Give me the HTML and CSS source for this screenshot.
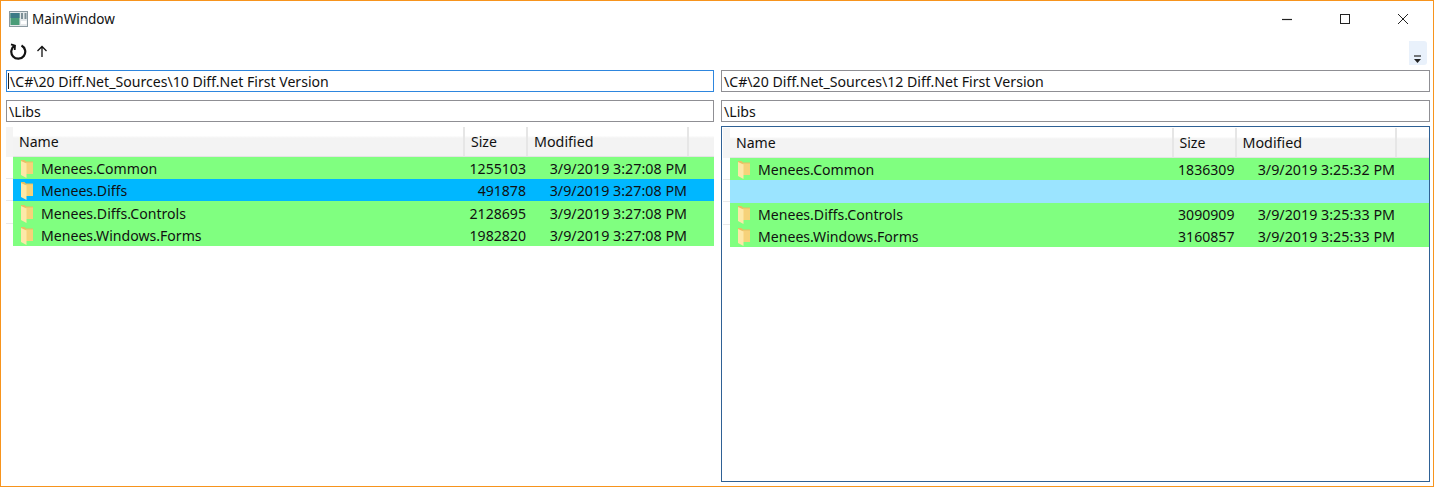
FILE: index.html
```html
<!DOCTYPE html>
<html lang="en">
<head>
    <meta charset="UTF-8">
    <title>MainWindow</title>
    <link rel="stylesheet" href="styles.css">
</head>
<body>
    <svg width="0" height="0" class="defs">
        <symbol id="folder" viewBox="0 0 14 19">
            <path d="M1 1h3.500l1.500 1.500h7V15H1z" fill="#e6c062"/>
            <path d="M5.500 3.500H13V15H5.500z" fill="#f6d27a"/>
            <path d="M1 2 6.500 4.500V19L1 16z" fill="#fde8a8"/>
        </symbol>
    </svg>
    <div class="window">
        <div class="titlebar">
            <div class="title">
                <svg class="app-icon" width="19" height="16" viewBox="0 0 19 16">
                    <rect x="0.500" y="0.500" width="18" height="15" fill="#e4e8ea" stroke="#8b99a0"/>
                    <rect x="1.500" y="2" width="9" height="12" fill="#4a9c78"/>
                    <rect x="1.500" y="2" width="9" height="5" fill="#3c7a86"/>
                    <rect x="12" y="2" width="2" height="6" fill="#7d8f96"/>
                    <rect x="15.500" y="2" width="2" height="6" fill="#7d8f96"/>
                    <rect x="12" y="10" width="5.500" height="3" fill="#fff"/>
                </svg>
                <span>MainWindow</span>
            </div>
            <div class="win-buttons">
                <svg width="12" height="12" viewBox="0 0 12 12"><path d="M1 6.500h10" stroke="#222" stroke-width="1.200"/></svg>
                <svg width="12" height="12" viewBox="0 0 12 12"><rect x="1.500" y="1.500" width="9" height="9" fill="none" stroke="#222" stroke-width="1"/></svg>
                <svg width="12" height="12" viewBox="0 0 12 12"><path d="M1 1l10 10M11 1 1 11" stroke="#222" stroke-width="1"/></svg>
            </div>
        </div>

        <div class="toolbar">
            <div class="tools">
                <svg width="17" height="18" viewBox="0 0 17 18">
                    <path d="M11.500 3.500A7 7 0 1 1 4.500 3.800" fill="none" stroke="#111" stroke-width="2.200"/>
                    <path d="M1 2.300 5 3.600 4.700 8" fill="none" stroke="#111" stroke-width="1.800"/>
                </svg>
                <svg width="12" height="12" viewBox="0 0 12 12">
                    <path d="M6 12V1.500M1.500 6 6 1.500 10.500 6" fill="none" stroke="#111" stroke-width="1.300"/>
                </svg>
            </div>
            <div class="overflow">
                <svg width="10" height="10" viewBox="0 0 10 10">
                    <path d="M1 2h7" stroke="#222" stroke-width="1.200"/>
                    <path d="M1 5h7L4.500 9z" fill="#222"/>
                </svg>
            </div>
        </div>

        <div class="panes">
            <section class="pane pane-left">
                <div class="path path-focus">\C#\20 Diff.Net_Sources\10 Diff.Net First Version</div>
                <div class="path">\Libs</div>
                <div class="list">
                    <div class="gutter"></div>
                    <div class="table">
                        <div class="row head">
                            <div class="col-name">Name</div>
                            <div class="col-size">Size</div>
                            <div class="col-mod">Modified</div>
                        </div>
                        <div class="row same">
                            <div class="col-name"><svg class="folder"><use href="#folder"/></svg>Menees.Common</div>
                            <div class="col-size">1255103</div>
                            <div class="col-mod">3/9/2019 3:27:08 PM</div>
                        </div>
                        <div class="row selected">
                            <div class="col-name"><svg class="folder"><use href="#folder"/></svg>Menees.Diffs</div>
                            <div class="col-size">491878</div>
                            <div class="col-mod">3/9/2019 3:27:08 PM</div>
                        </div>
                        <div class="row same tall">
                            <div class="col-name"><svg class="folder"><use href="#folder"/></svg>Menees.Diffs.Controls</div>
                            <div class="col-size">2128695</div>
                            <div class="col-mod">3/9/2019 3:27:08 PM</div>
                        </div>
                        <div class="row same">
                            <div class="col-name"><svg class="folder"><use href="#folder"/></svg>Menees.Windows.Forms</div>
                            <div class="col-size">1982820</div>
                            <div class="col-mod">3/9/2019 3:27:08 PM</div>
                        </div>
                    </div>
                </div>
            </section>

            <section class="pane pane-right">
                <div class="path">\C#\20 Diff.Net_Sources\12 Diff.Net First Version</div>
                <div class="path">\Libs</div>
                <div class="list list-focus">
                    <div class="gutter"></div>
                    <div class="table">
                        <div class="row head">
                            <div class="col-name">Name</div>
                            <div class="col-size">Size</div>
                            <div class="col-mod">Modified</div>
                        </div>
                        <div class="row same">
                            <div class="col-name"><svg class="folder"><use href="#folder"/></svg>Menees.Common</div>
                            <div class="col-size">1836309</div>
                            <div class="col-mod">3/9/2019 3:25:32 PM</div>
                        </div>
                        <div class="row missing tall"></div>
                        <div class="row same">
                            <div class="col-name"><svg class="folder"><use href="#folder"/></svg>Menees.Diffs.Controls</div>
                            <div class="col-size">3090909</div>
                            <div class="col-mod">3/9/2019 3:25:33 PM</div>
                        </div>
                        <div class="row same">
                            <div class="col-name"><svg class="folder"><use href="#folder"/></svg>Menees.Windows.Forms</div>
                            <div class="col-size">3160857</div>
                            <div class="col-mod">3/9/2019 3:25:33 PM</div>
                        </div>
                    </div>
                </div>
            </section>
        </div>
    </div>
</body>
</html>
```

FILE: styles.css
```css
html, body {
    margin: 0;
    padding: 0;
}

body {
    background: #fff;
    font-family: "Noto Sans", "Open Sans", sans-serif;
    font-size: 14.1px;
    color: #111;
}

.defs {
    display: block;
    height: 0;
}

.window {
    box-sizing: border-box;
    width: 1434px;
    height: 487px;
    border: 1px solid #f7941d;
    display: flex;
    flex-direction: column;
    overflow: hidden;
}

.titlebar {
    height: 35px;
    flex: none;
    display: flex;
    justify-content: space-between;
    align-items: center;
    padding-left: 8px;
}

.title {
    display: flex;
    align-items: center;
    gap: 4px;
    font-size: 13.5px;
}

.win-buttons {
    display: flex;
    gap: 46px;
    padding-right: 24px;
    padding-top: 1px;
}

.toolbar {
    height: 30px;
    flex: none;
    display: flex;
    justify-content: space-between;
    padding: 5px 6px 0 9px;
    box-sizing: border-box;
}

.tools {
    display: flex;
    align-items: center;
    gap: 9px;
    height: 24px;
    padding-bottom: 4px;
    box-sizing: border-box;
}

.overflow {
    width: 18px;
    height: 24px;
    background: #e9f1fb;
    border-radius: 0 3px 3px 0;
    display: flex;
    justify-content: center;
    align-items: flex-end;
    padding-bottom: 1px;
    box-sizing: border-box;
}

.panes {
    flex: 1;
    display: flex;
    gap: 7px;
    padding: 4px 3px 4px 5px;
    min-height: 0;
}

.pane {
    display: flex;
    flex-direction: column;
    gap: 8px;
}

.pane-left {
    width: 708px;
}

.pane-right {
    width: 709px;
}

.path {
    box-sizing: border-box;
    height: 22px;
    flex: none;
    border: 1px solid #8f8f94;
    padding-left: 2px;
    font-size: 14.15px;
    line-height: 22px;
    white-space: nowrap;
}

.path-focus {
    position: relative;
    padding-left: 3px;
    font-size: 14.1px;
    border-color: #2e86de;
}

/* text caret */
.path-focus::before {
    content: "";
    position: absolute;
    left: 1px;
    top: 2px;
    width: 1px;
    height: 16px;
    background: #222;
}

.list {
    flex: 1;
    display: flex;
    margin-top: -4px;
    padding-top: 1px;
    box-sizing: border-box;
}

.list-focus {
    border: 1px solid #2f6195;
    padding: 1px 0 0 1px;
}

/* header stub and the row divider ticks left of the rows */
.gutter {
    width: 7px;
    height: 120px;
    flex: none;
    background: linear-gradient(#f4f4f4 30px, #fff 30px, #fff 51px, #eaeaea 51px, #eaeaea 52px, #fff 52px, #fff 73px, #eaeaea 73px, #eaeaea 74px, #fff 74px, #fff 96px, #eaeaea 96px, #eaeaea 97px, #fff 97px);
}

.table {
    flex: 1;
}

.row {
    display: grid;
    align-items: center;
    height: 22px;
}

.tall {
    height: 23px;
}

.pane-left .tall {
    box-sizing: border-box;
    padding-top: 1px;
}

.pane-left .row {
    grid-template-columns: 452px 63px 161px;
}

.pane-right .row {
    grid-template-columns: 443.5px 63px 160.5px;
}

.head {
    height: 30px;
    background: linear-gradient(#fff 30%, #f3f3f3 38%, #f3f3f3);
    border-bottom: 1px solid #e3e3e3;
    box-sizing: border-box;
}

.head > div {
    box-sizing: border-box;
    height: 29px;
    line-height: 30px;
    padding-left: 6px;
    border-right: 2px solid #e6e6e6;
    text-align: left;
}

.same {
    background: #80ff80;
}

.selected {
    background: #00b7ff;
}

.missing {
    background: #9be4ff;
}

.col-name {
    display: flex;
    align-items: center;
    padding-left: 7px;
    white-space: nowrap;
}

.folder {
    width: 14px;
    height: 19px;
    margin-right: 7px;
    flex: none;
}

.col-size {
    text-align: right;
    padding-right: 2px;
}

.col-mod {
    text-align: right;
    padding-right: 2px;
    font-size: 14.3px;
    white-space: nowrap;
}
```
